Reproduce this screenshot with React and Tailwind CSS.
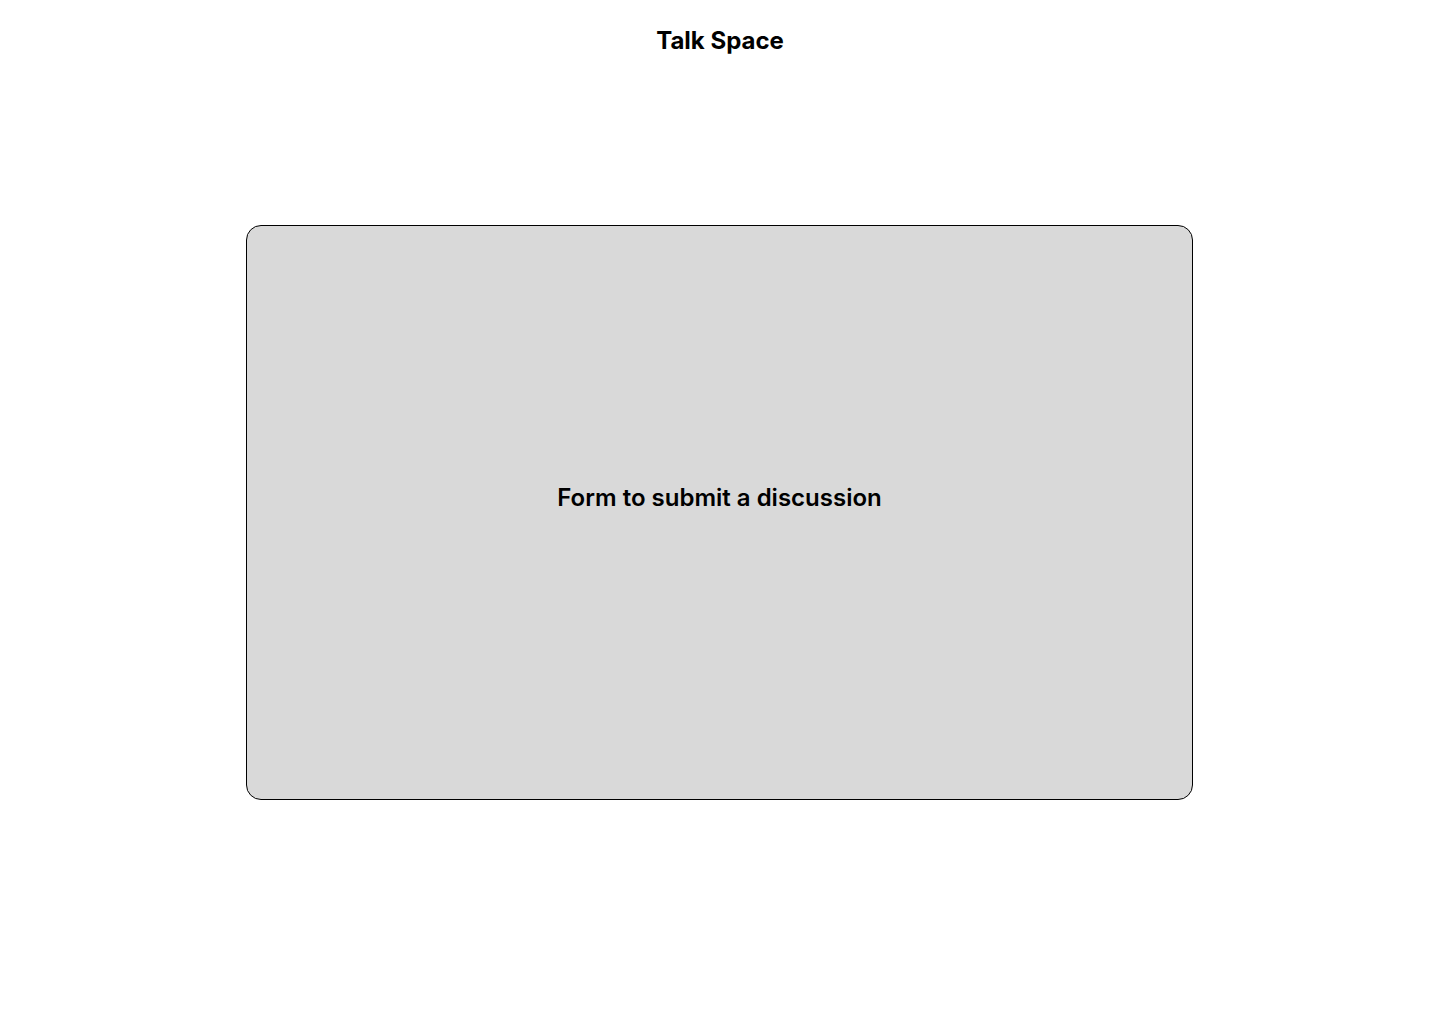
import React from "react";

export default function App() {
  return (
    <div className="min-h-screen bg-white font-['Inter',sans-serif] text-black">
      {/* Header */}
      <header className="pt-[25px] text-center">
        <h1 className="text-2xl font-bold leading-8">Talk Space</h1>
      </header>

      {/* Discussion form placeholder */}
      <main className="mt-[168px] pl-[246px]">
        <section className="flex h-[575px] w-[947px] items-center justify-center rounded-[15px] border border-black bg-[#d9d9d9] pb-[30px]">
          <p className="text-2xl font-semibold leading-8">Form to submit a discussion</p>
        </section>
      </main>
    </div>
  );
}
